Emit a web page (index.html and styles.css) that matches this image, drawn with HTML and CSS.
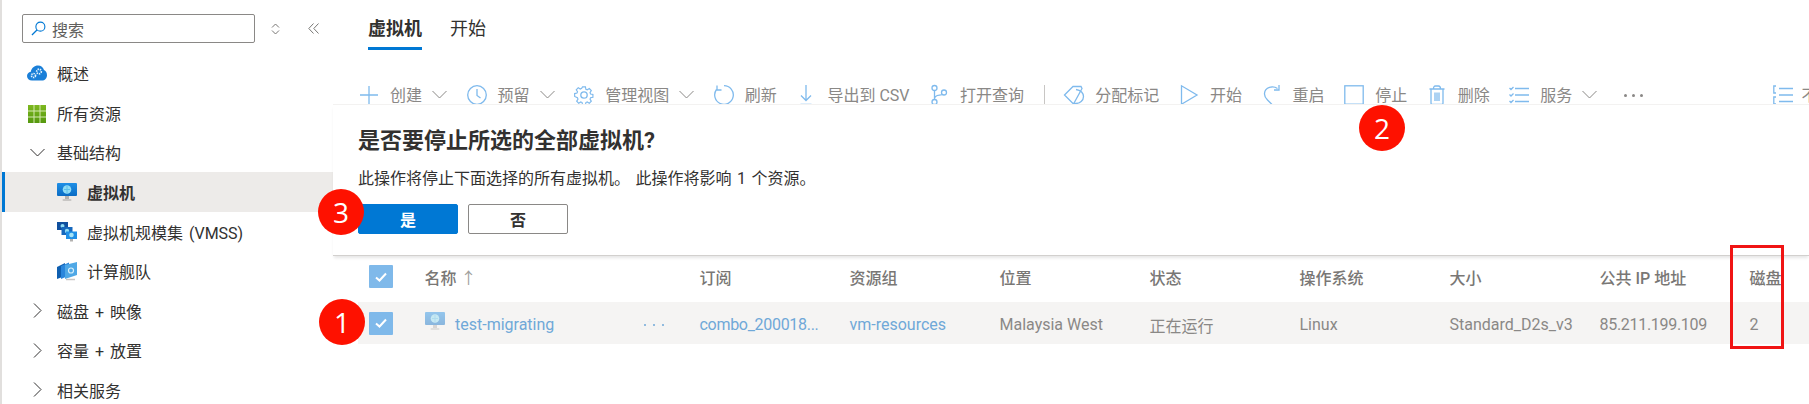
FILE: index.html
```html
<!DOCTYPE html>
<html lang="zh-CN">
<head>
    <meta charset="UTF-8">
    <meta name="viewport" content="width=device-width, initial-scale=1.0">
    <title>虚拟机</title>
    <link rel="stylesheet" href="styles.css">
</head>
<body>
    <svg class="defs" width="0" height="0" aria-hidden="true">
        <defs>
            <linearGradient id="screenBlue" x1="0" y1="0" x2="0" y2="1">
                <stop offset="0" stop-color="#1f8fe6"/>
                <stop offset="1" stop-color="#0a6cc4"/>
            </linearGradient>
            <linearGradient id="gridGreen" x1="0" y1="0" x2="0" y2="1">
                <stop offset="0" stop-color="#7db81f"/>
                <stop offset="1" stop-color="#55980f"/>
            </linearGradient>
            <symbol id="monitor" viewBox="0 0 20 20">
                <rect x="0" y="1" width="20" height="13" rx="1" fill="url(#screenBlue)"/>
                <circle cx="10" cy="7.5" r="4.3" fill="#8fdcf5"/>
                <path d="M7 7.5h6M10 4v7" stroke="#5cc0ea" stroke-width="1"/>
                <rect x="8" y="14" width="4" height="3" fill="#b3b1af"/>
                <rect x="5.5" y="17" width="9" height="2" rx="1" fill="#c8c6c4"/>
            </symbol>
            <symbol id="chev-down" viewBox="0 0 15 9">
                <path d="M.5 1 7.5 8 14.5 1" fill="none" stroke="currentColor" stroke-width="1"/>
            </symbol>
        </defs>
    </svg>

    <div class="page">
        <aside class="sidebar">
            <div class="search-row">
                <div class="search-box">
                    <svg class="search-icon" viewBox="0 0 16 16"><circle cx="10" cy="6" r="4.8" fill="none" stroke="#0078d4" stroke-width="1.2"/><path d="M6.6 9.4 1 15" stroke="#0078d4" stroke-width="1.4"/></svg>
                    <span>搜索</span>
                </div>
                <svg class="stepper" viewBox="0 0 9 12"><path d="M1 4.5 4.5 1 8 4.5M1 7.5 4.5 11 8 7.5" fill="none" stroke="#797775" stroke-width="1"/></svg>
                <svg class="collapse" viewBox="0 0 11 11"><path d="M5.5.5.8 5.5l4.7 5M10.5.5 5.8 5.5l4.7 5" fill="none" stroke="#797775" stroke-width="1"/></svg>
            </div>
            <nav class="nav">
                <div class="nav-item">
                    <svg class="nav-icon" viewBox="0 0 20 16"><path d="M5 15.5C2 15.5 0 13.500 0 11c0-2.300 1.600-4 3.800-4.300C4.500 3 7.500.5 11 .5c3 0 5.300 1.800 6 4.500 1.600.6 3 2.600 3 5.200 0 3-2.200 5.300-5 5.300z" fill="#1a7fd8"/><circle cx="6.500" cy="10.500" r="2" fill="none" stroke="#e3f3fd" stroke-width="1.700" stroke-dasharray="1.300 .8"/><circle cx="12" cy="6.500" r="2.300" fill="none" stroke="#e3f3fd" stroke-width="1.700" stroke-dasharray="1.300 .8"/></svg>
                    <span>概述</span>
                </div>
                <div class="nav-item">
                    <svg class="nav-icon grid-icon" viewBox="0 0 18 18"><rect width="18" height="18" fill="url(#gridGreen)"/><path d="M6 0v18M12 0v18M0 6h18M0 12h18" stroke="#d5e8b0" stroke-width="1"/></svg>
                    <span>所有资源</span>
                </div>
                <div class="nav-item">
                    <svg class="nav-chev" viewBox="0 0 15 9"><use href="#chev-down"/></svg>
                    <span>基础结构</span>
                </div>
                <div class="nav-item sub selected">
                    <svg class="sub-icon"><use href="#monitor"/></svg>
                    <span>虚拟机</span>
                </div>
                <div class="nav-item sub">
                    <svg class="sub-icon" viewBox="0 0 20 20">
                        <rect x="0" y="0" width="11" height="8" fill="#0f4f9e"/><circle cx="5.500" cy="4" r="2" fill="#8fdcf5"/>
                        <rect x="4.500" y="5" width="11" height="8" fill="#1668bd"/><circle cx="10" cy="9" r="2.200" fill="#8fdcf5"/>
                        <rect x="9" y="9.500" width="11" height="7.500" fill="#1f8fe6"/><circle cx="14.500" cy="13" r="2.300" fill="#a5e4f7"/>
                        <rect x="13" y="17" width="3" height="2.500" fill="#b3b1af"/>
                    </svg>
                    <span>虚拟机规模集 (VMSS)</span>
                </div>
                <div class="nav-item sub">
                    <svg class="sub-icon" viewBox="0 0 20 20">
                        <path d="M0 6 8 2v13l-8 3z" fill="#0f5fb0"/>
                        <path d="M4 5l8-3.500v13L4 18z" fill="#2a86dc"/>
                        <path d="M8 4l12-3v13L8 18z" fill="#4fa8e6"/>
                        <circle cx="14" cy="9.500" r="2.500" fill="none" stroke="#d8effb" stroke-width="1.200"/>
                        <path d="M9 18.500h9" stroke="#c8c6c4" stroke-width="1.500"/>
                    </svg>
                    <span>计算舰队</span>
                </div>
                <div class="nav-item">
                    <svg class="nav-chev right" viewBox="0 0 9 15"><path d="M1 .5 8 7.500 1 14.500" fill="none" stroke="currentColor" stroke-width="1"/></svg>
                    <span>磁盘 + 映像</span>
                </div>
                <div class="nav-item">
                    <svg class="nav-chev right" viewBox="0 0 9 15"><path d="M1 .5 8 7.500 1 14.500" fill="none" stroke="currentColor" stroke-width="1"/></svg>
                    <span>容量 + 放置</span>
                </div>
                <div class="nav-item">
                    <svg class="nav-chev right" viewBox="0 0 9 15"><path d="M1 .5 8 7.500 1 14.500" fill="none" stroke="currentColor" stroke-width="1"/></svg>
                    <span>相关服务</span>
                </div>
            </nav>
        </aside>

        <main class="content">
            <div class="tabs">
                <div class="tab active">虚拟机</div>
                <div class="tab">开始</div>
            </div>

            <div class="toolbar">
                <div class="tool">
                    <svg class="tool-icon" viewBox="0 0 20 20"><path d="M10 1v18M1 10h18"/></svg><span>创建</span>
                    <svg class="tool-chev"><use href="#chev-down"/></svg>
                </div>
                <div class="tool">
                    <svg class="tool-icon" viewBox="0 0 20 20"><circle cx="10" cy="10" r="9.300"/><path d="M10 4v6.500l3.500 2.500"/></svg><span>预留</span>
                    <svg class="tool-chev"><use href="#chev-down"/></svg>
                </div>
                <div class="tool">
                    <svg class="tool-icon" viewBox="0 0 20 20"><circle cx="10" cy="10" r="3.200"/><path d="M8.400 1h3.200l.5 2.600 1.500.7 2.300-1.400 2.200 2.300-1.400 2.200.6 1.500 2.600.5v3.200l-2.600.5-.6 1.500 1.400 2.200-2.200 2.300-2.300-1.400-1.500.7-.5 2.600H8.400l-.5-2.600-1.500-.7-2.300 1.400-2.200-2.300 1.400-2.200-.6-1.500L-.4 11.600V8.400l2.600-.5.6-1.500-1.400-2.200 2.200-2.300 2.300 1.400 1.500-.7z" transform="translate(1 1) scale(.9)"/></svg><span>管理视图</span>
                    <svg class="tool-chev"><use href="#chev-down"/></svg>
                </div>
                <div class="tool">
                    <svg class="tool-icon" viewBox="0 0 20 20"><path d="M10 .7A9.300 9.300 0 1 1 2.500 4.500M3 .5v4.500h4.500"/></svg><span>刷新</span>
                </div>
                <div class="tool">
                    <svg class="tool-icon" viewBox="0 0 20 20"><path d="M10 0v15M5 10.500l5 5 5-5M4.500 19.500h11"/></svg><span>导出到 CSV</span>
                </div>
                <div class="tool">
                    <svg class="tool-icon" viewBox="0 0 20 20"><circle cx="5.500" cy="3" r="2.500"/><circle cx="5.500" cy="17" r="2.500"/><circle cx="15" cy="7.500" r="2.500"/><path d="M5.500 5.500v9M5.500 14c0-3 2-3.500 5-3.800 2-.2 3.500-.7 3.800-.9"/></svg><span>打开查询</span>
                </div>
                <div class="tool-sep"></div>
                <div class="tool">
                    <svg class="tool-icon" viewBox="0 0 20 20"><path d="M.5 10 9 1.500h8l1 2-8.500 15.500z"/><path d="M12 4.500c5 .5 7.500 4 7.500 7 0 4-3.500 7-8 7h-2"/></svg><span>分配标记</span>
                </div>
                <div class="tool">
                    <svg class="tool-icon" viewBox="0 0 20 20"><path d="M2.500 .8v18.400L18 10z"/></svg><span>开始</span>
                </div>
                <div class="tool">
                    <svg class="tool-icon" viewBox="0 0 20 20"><path d="M15.500 3.500C11 .5 3 2 2.500 8.500c-.2 3 1.500 5 3 6.500l4.500 4.500M17 0v5l-5 0"/></svg><span>重启</span>
                </div>
                <div class="tool">
                    <svg class="tool-icon" viewBox="0 0 20 20"><rect x=".8" y=".8" width="18.400" height="18.400"/></svg><span>停止</span>
                </div>
                <div class="tool">
                    <svg class="tool-icon" viewBox="0 0 20 20"><path d="M2.500 4h15M4 4v14a1.500 1.500 0 0 0 1.500 1.500h9A1.500 1.500 0 0 0 16 18V4M6.500 4C6.500 2 7 1 8.500 1h3c1.500 0 2 1 2 3M8 7.500v8.500M10 7.500v8.500M12 7.500v8.500"/></svg><span>删除</span>
                </div>
                <div class="tool">
                    <svg class="tool-icon" viewBox="0 0 20 20"><path d="M6 3.500h14M6 10h14M6 16.500h14M.5 3l1.500 1.500L4.500 2M.5 9.500 2 11l2.500-2.500M.5 16 2 17.500 4.500 15"/></svg><span>服务</span>
                    <svg class="tool-chev"><use href="#chev-down"/></svg>
                </div>
                <div class="tool-dots">
                    <i></i><i></i><i></i>
                </div>
                <div class="tool tool-end">
                    <svg class="tool-icon" viewBox="0 0 20 20"><path d="M6 3.500h14M6 10h14M6 16.500h14M3 1H.8v7H3M3 12H.8v7H3"/></svg><span>不</span>
                </div>
            </div>

            <section class="confirm">
                <h2 class="confirm-title">是否要停止所选的全部虚拟机?</h2>
                <p class="confirm-text">此操作将停止下面选择的所有虚拟机。 此操作将影响 1 个资源。</p>
                <div class="confirm-actions">
                    <button class="btn btn-primary">是</button>
                    <button class="btn">否</button>
                </div>
            </section>

            <div class="table">
                <div class="row head">
                    <div class="cell check-cell"><span class="checkbox"><svg viewBox="0 0 12 10"><path d="M1 5.500 4.500 8.500 11 1.500"/></svg></span></div>
                    <div class="cell">名称 <span class="sort">↑</span></div>
                    <div class="cell">订阅</div>
                    <div class="cell">资源组</div>
                    <div class="cell">位置</div>
                    <div class="cell">状态</div>
                    <div class="cell">操作系统</div>
                    <div class="cell">大小</div>
                    <div class="cell">公共 IP 地址</div>
                    <div class="cell">磁盘</div>
                </div>
                <div class="row item">
                    <div class="cell check-cell"><span class="checkbox"><svg viewBox="0 0 12 10"><path d="M1 5.500 4.500 8.500 11 1.500"/></svg></span></div>
                    <div class="cell name-cell">
                        <svg class="vm-icon"><use href="#monitor"/></svg>
                        <span class="link">test-migrating</span>
                        <span class="row-dots"><i></i><i></i><i></i></span>
                    </div>
                    <div class="cell link tight">combo_200018...</div>
                    <div class="cell link">vm-resources</div>
                    <div class="cell">Malaysia West</div>
                    <div class="cell">正在运行</div>
                    <div class="cell">Linux</div>
                    <div class="cell">Standard_D2s_v3</div>
                    <div class="cell tight">85.211.199.109</div>
                    <div class="cell">2</div>
                </div>
            </div>
        </main>

        <div class="marker marker-one">1</div>
        <div class="marker marker-two">2</div>
        <div class="marker marker-three">3</div>
        <div class="disk-box"></div>
    </div>
</body>
</html>
```

FILE: styles.css
```css
* {
    box-sizing: border-box;
}
html, body {
    margin: 0;
    height: 100%;
    overflow: hidden;
    background: #fff;
}
body {
    font-family: Roboto, "Noto Sans CJK SC", sans-serif;
    font-size: 16px;
    color: #323130;
}
.defs {
    position: absolute;
}
.page {
    position: relative;
    display: flex;
    width: 1809px;
    height: 404px;
    overflow: hidden;
}

/* left menu */
.sidebar {
    flex: 0 0 333px;
    border-left: 2px solid #e1dfdd;
}
.search-row {
    display: flex;
    align-items: center;
    height: 29px;
    margin-top: 14px;
    padding-left: 20px;
}
.search-box {
    display: flex;
    align-items: center;
    gap: 6px;
    width: 233px;
    height: 29px;
    padding-left: 8px;
    border: 1px solid #8a8886;
    border-radius: 2px;
    color: #605e5c;
}
.search-icon {
    width: 15px;
    height: 15px;
}
.stepper {
    width: 9px;
    height: 12px;
    margin-left: 16px;
}
.collapse {
    width: 11px;
    height: 11px;
    margin-left: 28px;
}
.nav {
    padding-top: 10.5px;
    word-spacing: 2px;
}
.nav-item {
    display: flex;
    align-items: center;
    height: 39.5px;
    padding-left: 55px;
    position: relative;
}
.nav-icon {
    position: absolute;
    left: 25px;
    width: 20px;
    height: 20px;
}
.grid-icon {
    left: 26px;
    width: 18px;
    height: 18px;
    margin-top: 2px;
}
.nav-chev {
    position: absolute;
    left: 28px;
    width: 15px;
    height: 9px;
    color: #323130;
}
.nav-chev.right {
    left: 31px;
    width: 9px;
    height: 15px;
}
.nav-item.sub {
    padding-left: 85px;
}
.sub-icon {
    position: absolute;
    left: 55px;
    width: 20px;
    height: 20px;
}
.selected {
    height: 40px;
    background: #edebe9;
    font-weight: 700;
    box-shadow: inset 3px 0 0 #0078d4;
}

/* right side */
.content {
    flex: 1;
    min-width: 0;
}
.tabs {
    display: flex;
    gap: 28px;
    height: 50px;
    padding-left: 35px;
    font-size: 18px;
}
.tab {
    padding-top: 16px;
    line-height: 26px;
    height: 50px;
}
.tab.active {
    font-weight: 700;
    border-bottom: 3px solid #0078d4;
}

.toolbar {
    display: flex;
    gap: 19.6px;
    height: 54px;
    padding: 35px 0 0 26px;
    overflow: hidden;
    color: #8a8886;
}
.tool {
    display: flex;
    flex-shrink: 0;
    align-items: center;
    gap: 11px;
    height: 20px;
    line-height: 20px;
    white-space: nowrap;
}
.tool span {
    padding-top: 1px;
}
.tool-icon {
    width: 20px;
    height: 20px;
    overflow: visible;
    fill: none;
    stroke: #7fbaed;
    stroke-width: 1.3;
}
.tool-chev {
    width: 15px;
    height: 9px;
    margin: 0 0 2px -1px;
    color: #8a8886;
}
.tool-sep {
    flex-shrink: 0;
    width: 1px;
    height: 20px;
    background: #c8c6c4;
}
.tool-dots, .row-dots {
    display: flex;
    align-items: center;
}
.tool-dots {
    gap: 5px;
    height: 20px;
    margin-left: 7px;
    flex-shrink: 0;
}
.tool-dots i {
    width: 3px;
    height: 3px;
    border-radius: 50%;
    background: #8a8886;
}
.tool-end {
    margin-left: 110px;
    gap: 9px;
}

/* stop confirmation */
.confirm {
    position: relative;
    height: 152px;
    padding: 21px 0 0 25px;
    border-top: 1px solid #f3f2f1;
    border-bottom: 1px solid #d2d0ce;
    background: #fff;
    box-shadow: 0 3px 3px -1px rgba(0, 0, 0, 0.1);
}
.confirm-title {
    margin: 0;
    font-size: 22px;
    line-height: 30px;
    font-weight: 700;
}
.confirm-text {
    margin: 12px 0 0;
    line-height: 22px;
    word-spacing: 1.5px;
}
.confirm-actions {
    display: flex;
    gap: 10px;
    margin-top: 14px;
}
.btn {
    width: 100px;
    height: 30px;
    border: 1px solid #8a8886;
    border-radius: 2px;
    background: #fff;
    color: #323130;
    font: 700 16px "Noto Sans CJK SC", sans-serif;
    line-height: 28px;
    padding: 0;
}
.btn-primary {
    border-color: #0078d4;
    background: #0078d4;
    color: #fff;
}

/* table */
.table {
    margin-left: 25px;
    color: #8a8886;
}
.row {
    display: grid;
    grid-template-columns: 66.5px 275px repeat(8, 150px);
    align-items: center;
    white-space: nowrap;
}
.row.head {
    height: 46px;
    padding-bottom: 5px;
    font-weight: 500;
    color: #797775;
}
.row.item {
    height: 42px;
    background: #f5f4f3;
}
.row.item .cell {
    padding-top: 3px;
}
.row.item .check-cell {
    padding-top: 0;
}
.check-cell {
    display: flex;
    padding-left: 11px;
}
.checkbox {
    display: flex;
    align-items: center;
    justify-content: center;
    width: 24px;
    height: 23px;
    background: #7fb9ea;
    border-radius: 1px;
}
.checkbox svg {
    width: 12px;
    height: 10px;
    fill: none;
    stroke: #fff;
    stroke-width: 2;
}
.sort {
    color: #a19f9d;
    font-weight: 400;
}
.link {
    color: #6fa8d8;
}
.tight {
    letter-spacing: -0.3px;
}
.name-cell {
    display: flex;
    align-items: center;
}
.vm-icon {
    width: 20px;
    height: 20px;
    margin: 0 10.5px 7px 0;
    opacity: 0.45;
}
.row-dots {
    margin-left: auto;
    margin-right: 36px;
    gap: 7px;
}
.row-dots i {
    width: 2px;
    height: 2px;
    border-radius: 50%;
    background: #6fa8d8;
}

/* red annotations on top of the screenshot */
.marker {
    position: absolute;
    display: flex;
    align-items: center;
    justify-content: center;
    width: 46px;
    height: 46px;
    border-radius: 50%;
    background: #fe1100;
    color: #fff;
    font: 28px "Open Sans", sans-serif;
}
.marker-one {
    left: 319px;
    top: 299px;
}
.marker-two {
    left: 1359px;
    top: 105px;
}
.marker-three {
    left: 318px;
    top: 189px;
}
.disk-box {
    position: absolute;
    left: 1730px;
    top: 245px;
    width: 54px;
    height: 104px;
    border: 3px solid #f01414;
}
```
